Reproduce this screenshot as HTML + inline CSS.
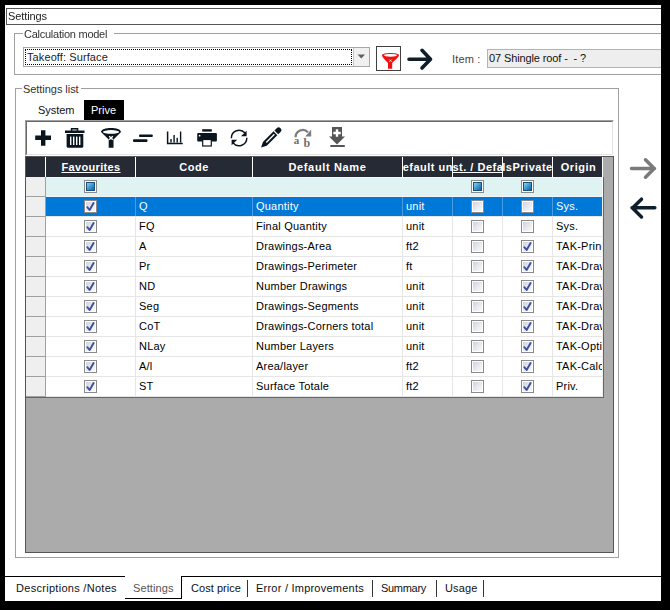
<!DOCTYPE html><html><head><meta charset="utf-8"><style>
*{margin:0;padding:0;box-sizing:border-box}
html,body{width:670px;height:610px;overflow:hidden;background:#000}
body{font-family:"Liberation Sans",sans-serif;font-size:11px;color:#000;position:relative}
.a{position:absolute}
.t{position:absolute;white-space:nowrap;line-height:13px}
.gl{position:absolute;background:#a0a0a0}
.cb{position:absolute;width:13px;height:13px;border:1px solid #8a8a8a;background:#fff}
.cb .in{position:absolute;left:1px;top:1px;width:9px;height:9px;background:linear-gradient(135deg,#cfd4de 0%,#e6e8ec 50%,#fafafa 100%)}
.cb.ind .in{background:linear-gradient(135deg,#8fd3f0 0%,#3b9bd0 50%,#1b5f98 100%);border:1px solid #1d4e80}
.hd{position:absolute;height:19px;color:#fff;font-weight:bold;line-height:19px;overflow:hidden;white-space:nowrap;display:flex;justify-content:center;letter-spacing:0.5px}
.hd span{flex:none}
.cell{position:absolute;height:19px;line-height:19px;overflow:hidden;white-space:nowrap;padding-left:3px;letter-spacing:0.22px}
</style></head><body><div class="a" style="left:0;top:0;width:661px;height:601px;overflow:hidden">
<div class="a" style="left:5px;top:5px;width:656px;height:596px;background:#fff"></div>
<div class="a" style="left:6px;top:8px;width:660px;height:17px;border:1px solid #555"></div>
<div class="t" style="left:8px;top:10px;color:#222;letter-spacing:-0.1px;will-change:transform">Settings</div>
<div class="gl" style="left:14px;top:33px;width:1px;height:42px"></div>
<div class="gl" style="left:14px;top:74px;width:650px;height:1px"></div>
<div class="gl" style="left:14px;top:33px;width:9px;height:1px"></div>
<div class="gl" style="left:114px;top:33px;width:550px;height:1px"></div>
<div class="t" style="left:24px;top:28px;color:#333;letter-spacing:-0.25px;will-change:transform">Calculation model</div>
<div class="a" style="left:23px;top:47px;width:347px;height:20px;border:1px solid #a8a8a8;background:#fff"></div>
<div class="a" style="left:25px;top:49px;width:327px;height:16px;border:1px dotted #000"></div>
<div class="a" style="left:353px;top:48px;width:16px;height:18px;background:#f0f0f0;border-left:1px solid #c8c8c8"></div>
<svg class="a" style="left:357px;top:54px" width="9" height="5"><path d="M0.5 0.5 H8 L4.25 4.5 Z" fill="#606060"/></svg>
<div class="t" style="left:27px;top:51px;color:#1a1a2a;letter-spacing:0.1px">Takeoff: Surface</div>
<div class="a" style="left:376px;top:46px;width:25px;height:25px;border:1px solid #404040;background:#fff"></div>
<svg class="a" style="left:372px;top:42px" width="32" height="32" viewBox="0 0 32 32"><path d="M10 13.3 C10 10.2 27 10.2 27 13.3 C27 15.2 22.5 18.5 20.2 21 V26.8 H16 V21 C13.6 18.5 10 15.2 10 13.3 Z" fill="#ee1111"/><ellipse cx="18.5" cy="13.3" rx="6.6" ry="1.4" fill="#fff"/><path d="M17.4 17.6 L19.6 19.8 M19.6 17.6 L17.4 19.8" stroke="#fff" stroke-width="0.8"/></svg>
<svg class="a" style="left:400px;top:44px" width="40" height="30"><path d="M9 15.2 H30 M22 6.3 L30.5 15.2 L22 24" fill="none" stroke="#0f1e2a" stroke-width="3.6" stroke-linecap="round" stroke-linejoin="round"/></svg>
<div class="t" style="left:452px;top:53px;color:#444;letter-spacing:0.15px">Item :</div>
<div class="a" style="left:487px;top:49px;width:200px;height:19px;border:1px solid #aab4c4;background:#eeeeee"></div>
<div class="t" style="left:489px;top:52px;color:#111;letter-spacing:-0.12px">07 Shingle roof -&nbsp; - ?</div>
<div class="gl" style="left:15px;top:88px;width:1px;height:470px"></div>
<div class="gl" style="left:15px;top:557px;width:604px;height:1px"></div>
<div class="gl" style="left:618px;top:88px;width:1px;height:470px"></div>
<div class="gl" style="left:15px;top:88px;width:7px;height:1px"></div>
<div class="gl" style="left:81px;top:88px;width:538px;height:1px"></div>
<div class="t" style="left:23px;top:83px;color:#333;letter-spacing:-0.05px">Settings list</div>
<div class="t" style="left:38px;top:104px;color:#111;letter-spacing:-0.05px">System</div>
<div class="a" style="left:84px;top:100px;width:40px;height:20px;background:#000"></div>
<div class="t" style="left:91px;top:104px;color:#fff">Prive</div>
<div class="a" style="left:25px;top:120px;width:589px;height:36px;border-top:1px solid #a0a0a0;border-left:1px solid #a0a0a0;border-right:1px solid #fff;border-bottom:1px solid #fff"></div>
<div class="a" style="left:26px;top:121px;width:587px;height:34px;border-top:1px solid #696969;border-left:1px solid #696969;border-right:1px solid #e3e3e3;border-bottom:1px solid #e3e3e3"></div>
<svg class="a" style="left:35px;top:130px" width="17" height="17"><path d="M6 0.2 H10.4 V5.6 H16 V10 H10.4 V15.7 H6 V10 H0.2 V5.6 H6 Z" fill="#0a1520"/></svg>
<svg class="a" style="left:64px;top:127px" width="22" height="22"><path d="M6.8 1 H14.3 V3.6 H20.5 V6 H1 V3.6 H6.8 Z" fill="#0a1520"/><rect x="8.3" y="2.3" width="4.5" height="1.4" fill="#fff" opacity="0.6"/><path d="M2.6 7 H19.3 V19.6 Q19.3 20.7 18.2 20.7 H3.7 Q2.6 20.7 2.6 19.6 Z" fill="#0a1520"/><rect x="6" y="9.6" width="1.4" height="8.4" fill="#fff"/><rect x="9" y="9.6" width="1.4" height="8.4" fill="#fff"/><rect x="12" y="9.6" width="1.4" height="8.4" fill="#fff"/><rect x="15" y="9.6" width="1.4" height="8.4" fill="#fff"/></svg>
<svg class="a" style="left:100px;top:127px" width="22" height="22"><path d="M1 5 C1 -0.5 21 -0.5 21 5 L13.5 12.5 V20.7 H8.7 V12.5 Z" fill="#0a1520"/><ellipse cx="11" cy="4.9" rx="8.1" ry="1.8" fill="#fff"/><path d="M9.2 9.3 L12.8 12.8 M12.8 9.3 L9.2 12.8" stroke="#fff" stroke-width="1.4"/></svg>
<svg class="a" style="left:132px;top:133px" width="22" height="10"><rect x="7" y="1.4" width="13.8" height="2.6" rx="1" fill="#0a1520"/><rect x="1" y="6.3" width="14.5" height="2.7" rx="1" fill="#0a1520"/></svg>
<svg class="a" style="left:166px;top:130px" width="18" height="16"><path d="M1.6 1.5 V13.6 H16.8" fill="none" stroke="#0a1520" stroke-width="1.5"/><rect x="4.3" y="9" width="1.4" height="3.6" fill="#0a1520"/><rect x="7.4" y="5" width="1.4" height="7.6" fill="#0a1520"/><rect x="10.5" y="7.8" width="1.4" height="4.8" fill="#0a1520"/><rect x="13.9" y="1.5" width="1.4" height="11.1" fill="#0a1520"/></svg>
<svg class="a" style="left:196px;top:128px" width="22" height="20"><rect x="6.2" y="1.2" width="9.6" height="2.4" fill="#0a1520"/><rect x="1.2" y="5" width="19.7" height="8.4" rx="1" fill="#0a1520"/><circle cx="3.6" cy="7.7" r="0.9" fill="#fff"/><rect x="6.7" y="11.5" width="8.6" height="6.5" fill="#fff" stroke="#0a1520" stroke-width="1.2"/></svg>
<svg class="a" style="left:229px;top:128px" width="20" height="20"><path d="M2.4 10.2 A7.7 7.7 0 0 1 16 5.05" fill="none" stroke="#0a1520" stroke-width="1.45"/><path d="M17.6 2.7 V8.3 H12 Z" fill="#0a1520"/><path d="M17.8 9.8 A7.7 7.7 0 0 1 4.2 14.95" fill="none" stroke="#0a1520" stroke-width="1.45"/><path d="M2.6 17.3 V11.7 H8.2 Z" fill="#0a1520"/></svg>
<svg class="a" style="left:255px;top:122px" width="30" height="30" viewBox="0 0 30 30"><path d="M6.1 25.6 L7.93 19.95 L18.53 9.35 L22.35 13.17 L11.75 23.77 Z" fill="#0a1520"/><path d="M11.25 20.45 L19.38 12.32" stroke="#fff" stroke-width="1.3"/><path d="M19.45 8.43 L23.27 12.25 L25.53 9.99 A2.7 2.7 0 0 0 21.71 6.17 Z" fill="#0a1520"/></svg>
<svg class="a" style="left:292px;top:126px" width="22" height="24"><path d="M3.6 11.2 A7.2 7.2 0 0 1 16 6.2" fill="none" stroke="#7e7e7e" stroke-width="2.3"/><path d="M19.2 3.4 V10.6 H13.2 Z" fill="#7e7e7e"/><text x="1.8" y="18" font-family="Liberation Serif" font-size="11" font-weight="bold" fill="#6e6e6e">a</text><text x="11.6" y="20.5" font-family="Liberation Serif" font-size="12" font-weight="bold" fill="#6e6e6e">b</text></svg>
<svg class="a" style="left:328px;top:126px" width="18" height="22"><path d="M4 1 H14 V10.5 H17 L9 18.5 L1 10.5 H4 Z" fill="#555"/><path d="M7.8 3.3 H10.2 V5.8 H12.7 V8.2 H10.2 V10.7 H7.8 V8.2 H5.3 V5.8 H7.8 Z" fill="#fff"/><rect x="2.3" y="19" width="14.5" height="2" fill="#555"/></svg>
<div class="a" style="left:25px;top:156px;width:589px;height:397px;background:#ababab;border:1px solid #555"></div>
<div class="a" style="left:26px;top:157px;width:577px;height:20px;background:#252a35"></div>
<div class="a" style="left:45px;top:157px;width:1px;height:20px;background:#fff"></div>
<div class="a" style="left:135px;top:157px;width:1px;height:20px;background:#fff"></div>
<div class="hd" style="left:47px;top:158px;width:88px;letter-spacing:0.35px"><span style="text-decoration:underline;">Favourites</span></div>
<div class="a" style="left:252px;top:157px;width:1px;height:20px;background:#fff"></div>
<div class="hd" style="left:136px;top:158px;width:116px;letter-spacing:0.5px"><span style="">Code</span></div>
<div class="a" style="left:402px;top:157px;width:1px;height:20px;background:#fff"></div>
<div class="hd" style="left:253px;top:158px;width:149px;letter-spacing:0.65px"><span style="">Default Name</span></div>
<div class="a" style="left:452px;top:157px;width:1px;height:20px;background:#fff"></div>
<div class="hd" style="left:403px;top:158px;width:49px;letter-spacing:0.5px"><span style="">Default unit</span></div>
<div class="a" style="left:502px;top:157px;width:1px;height:20px;background:#fff"></div>
<div class="hd" style="left:453px;top:158px;width:49px;letter-spacing:0.5px"><span style="text-decoration:underline;">Cust. / Default</span></div>
<div class="a" style="left:552px;top:157px;width:1px;height:20px;background:#fff"></div>
<div class="hd" style="left:503px;top:158px;width:49px;letter-spacing:0.5px"><span style="">IsPrivate</span></div>
<div class="a" style="left:602px;top:157px;width:1px;height:20px;background:#fff"></div>
<div class="hd" style="left:555px;top:158px;width:47px;letter-spacing:0.5px"><span style="">Origin</span></div>
<div class="a" style="left:26px;top:177px;width:578px;height:221px;background:#fff;border-right:1px solid #666;border-bottom:1px solid #666"></div>
<div class="a" style="left:46px;top:177px;width:556px;height:19px;background:#dff3f2;border-top:1px solid #ecfafa"></div>
<div class="a" style="left:26px;top:177px;width:20px;height:20px;background:#efefef;border-right:1px solid #a0a0a0;border-bottom:1px solid #a0a0a0"></div>
<div class="a" style="left:46px;top:196px;width:557px;height:1px;background:#f4f4f4"></div>
<div class="cb ind" style="left:84px;top:180px"><div class="in"></div></div>
<div class="cb ind" style="left:471px;top:180px"><div class="in"></div></div>
<div class="cb ind" style="left:521px;top:180px"><div class="in"></div></div>
<div class="a" style="left:26px;top:197px;width:20px;height:20px;background:#efefef;border-right:1px solid #a0a0a0;border-bottom:1px solid #a0a0a0"></div>
<div class="a" style="left:46px;top:197px;width:556px;height:19px;background:#0078d7"></div>
<div class="a" style="left:46px;top:216px;width:557px;height:1px;background:#e6e6e6"></div>
<div class="a" style="left:135px;top:197px;width:1px;height:19px;background:#4a9be2"></div>
<div class="a" style="left:252px;top:197px;width:1px;height:19px;background:#4a9be2"></div>
<div class="a" style="left:402px;top:197px;width:1px;height:19px;background:#4a9be2"></div>
<div class="a" style="left:452px;top:197px;width:1px;height:19px;background:#4a9be2"></div>
<div class="a" style="left:502px;top:197px;width:1px;height:19px;background:#4a9be2"></div>
<div class="a" style="left:552px;top:197px;width:1px;height:19px;background:#4a9be2"></div>
<div class="a" style="left:602px;top:197px;width:1px;height:20px;background:#f0f0f0"></div>
<div class="cb" style="left:84px;top:200px"><div class="in"></div><svg style="position:absolute;left:-1px;top:-1px" width="13" height="13" viewBox="0 0 13 13"><path d="M3.3 7.2 L5.6 10 L9.6 3" fill="none" stroke="#3b4f9e" stroke-width="1.9" stroke-linecap="round" stroke-linejoin="round"/></svg></div>
<div class="cell" style="left:136px;top:197px;width:116px;color:#fff">Q</div>
<div class="cell" style="left:253px;top:197px;width:149px;color:#fff">Quantity</div>
<div class="cell" style="left:403px;top:197px;width:49px;color:#fff">unit</div>
<div class="cb" style="left:471px;top:200px"><div class="in"></div></div>
<div class="cb" style="left:521px;top:200px"><div class="in"></div></div>
<div class="cell" style="left:553px;top:197px;width:49px;color:#fff">Sys.</div>
<div class="a" style="left:26px;top:217px;width:20px;height:20px;background:#efefef;border-right:1px solid #a0a0a0;border-bottom:1px solid #a0a0a0"></div>
<div class="a" style="left:46px;top:217px;width:556px;height:19px;background:#fff"></div>
<div class="a" style="left:46px;top:236px;width:557px;height:1px;background:#e6e6e6"></div>
<div class="a" style="left:135px;top:217px;width:1px;height:19px;background:#e6e6e6"></div>
<div class="a" style="left:252px;top:217px;width:1px;height:19px;background:#e6e6e6"></div>
<div class="a" style="left:402px;top:217px;width:1px;height:19px;background:#e6e6e6"></div>
<div class="a" style="left:452px;top:217px;width:1px;height:19px;background:#e6e6e6"></div>
<div class="a" style="left:502px;top:217px;width:1px;height:19px;background:#e6e6e6"></div>
<div class="a" style="left:552px;top:217px;width:1px;height:19px;background:#e6e6e6"></div>
<div class="a" style="left:602px;top:217px;width:1px;height:20px;background:#f0f0f0"></div>
<div class="cb" style="left:84px;top:220px"><div class="in"></div><svg style="position:absolute;left:-1px;top:-1px" width="13" height="13" viewBox="0 0 13 13"><path d="M3.3 7.2 L5.6 10 L9.6 3" fill="none" stroke="#3b4f9e" stroke-width="1.9" stroke-linecap="round" stroke-linejoin="round"/></svg></div>
<div class="cell" style="left:136px;top:217px;width:116px;color:#000">FQ</div>
<div class="cell" style="left:253px;top:217px;width:149px;color:#000">Final Quantity</div>
<div class="cell" style="left:403px;top:217px;width:49px;color:#000">unit</div>
<div class="cb" style="left:471px;top:220px"><div class="in"></div></div>
<div class="cb" style="left:521px;top:220px"><div class="in"></div></div>
<div class="cell" style="left:553px;top:217px;width:49px;color:#000">Sys.</div>
<div class="a" style="left:26px;top:237px;width:20px;height:20px;background:#efefef;border-right:1px solid #a0a0a0;border-bottom:1px solid #a0a0a0"></div>
<div class="a" style="left:46px;top:237px;width:556px;height:19px;background:#fff"></div>
<div class="a" style="left:46px;top:256px;width:557px;height:1px;background:#e6e6e6"></div>
<div class="a" style="left:135px;top:237px;width:1px;height:19px;background:#e6e6e6"></div>
<div class="a" style="left:252px;top:237px;width:1px;height:19px;background:#e6e6e6"></div>
<div class="a" style="left:402px;top:237px;width:1px;height:19px;background:#e6e6e6"></div>
<div class="a" style="left:452px;top:237px;width:1px;height:19px;background:#e6e6e6"></div>
<div class="a" style="left:502px;top:237px;width:1px;height:19px;background:#e6e6e6"></div>
<div class="a" style="left:552px;top:237px;width:1px;height:19px;background:#e6e6e6"></div>
<div class="a" style="left:602px;top:237px;width:1px;height:20px;background:#f0f0f0"></div>
<div class="cb" style="left:84px;top:240px"><div class="in"></div><svg style="position:absolute;left:-1px;top:-1px" width="13" height="13" viewBox="0 0 13 13"><path d="M3.3 7.2 L5.6 10 L9.6 3" fill="none" stroke="#3b4f9e" stroke-width="1.9" stroke-linecap="round" stroke-linejoin="round"/></svg></div>
<div class="cell" style="left:136px;top:237px;width:116px;color:#000">A</div>
<div class="cell" style="left:253px;top:237px;width:149px;color:#000">Drawings-Area</div>
<div class="cell" style="left:403px;top:237px;width:49px;color:#000">ft2</div>
<div class="cb" style="left:471px;top:240px"><div class="in"></div></div>
<div class="cb" style="left:521px;top:240px"><div class="in"></div><svg style="position:absolute;left:-1px;top:-1px" width="13" height="13" viewBox="0 0 13 13"><path d="M3.3 7.2 L5.6 10 L9.6 3" fill="none" stroke="#3b4f9e" stroke-width="1.9" stroke-linecap="round" stroke-linejoin="round"/></svg></div>
<div class="cell" style="left:553px;top:237px;width:49px;color:#000">TAK-Principal</div>
<div class="a" style="left:26px;top:257px;width:20px;height:20px;background:#efefef;border-right:1px solid #a0a0a0;border-bottom:1px solid #a0a0a0"></div>
<div class="a" style="left:46px;top:257px;width:556px;height:19px;background:#fff"></div>
<div class="a" style="left:46px;top:276px;width:557px;height:1px;background:#e6e6e6"></div>
<div class="a" style="left:135px;top:257px;width:1px;height:19px;background:#e6e6e6"></div>
<div class="a" style="left:252px;top:257px;width:1px;height:19px;background:#e6e6e6"></div>
<div class="a" style="left:402px;top:257px;width:1px;height:19px;background:#e6e6e6"></div>
<div class="a" style="left:452px;top:257px;width:1px;height:19px;background:#e6e6e6"></div>
<div class="a" style="left:502px;top:257px;width:1px;height:19px;background:#e6e6e6"></div>
<div class="a" style="left:552px;top:257px;width:1px;height:19px;background:#e6e6e6"></div>
<div class="a" style="left:602px;top:257px;width:1px;height:20px;background:#f0f0f0"></div>
<div class="cb" style="left:84px;top:260px"><div class="in"></div><svg style="position:absolute;left:-1px;top:-1px" width="13" height="13" viewBox="0 0 13 13"><path d="M3.3 7.2 L5.6 10 L9.6 3" fill="none" stroke="#3b4f9e" stroke-width="1.9" stroke-linecap="round" stroke-linejoin="round"/></svg></div>
<div class="cell" style="left:136px;top:257px;width:116px;color:#000">Pr</div>
<div class="cell" style="left:253px;top:257px;width:149px;color:#000">Drawings-Perimeter</div>
<div class="cell" style="left:403px;top:257px;width:49px;color:#000">ft</div>
<div class="cb" style="left:471px;top:260px"><div class="in"></div></div>
<div class="cb" style="left:521px;top:260px"><div class="in"></div><svg style="position:absolute;left:-1px;top:-1px" width="13" height="13" viewBox="0 0 13 13"><path d="M3.3 7.2 L5.6 10 L9.6 3" fill="none" stroke="#3b4f9e" stroke-width="1.9" stroke-linecap="round" stroke-linejoin="round"/></svg></div>
<div class="cell" style="left:553px;top:257px;width:49px;color:#000">TAK-Drawings</div>
<div class="a" style="left:26px;top:277px;width:20px;height:20px;background:#efefef;border-right:1px solid #a0a0a0;border-bottom:1px solid #a0a0a0"></div>
<div class="a" style="left:46px;top:277px;width:556px;height:19px;background:#fff"></div>
<div class="a" style="left:46px;top:296px;width:557px;height:1px;background:#e6e6e6"></div>
<div class="a" style="left:135px;top:277px;width:1px;height:19px;background:#e6e6e6"></div>
<div class="a" style="left:252px;top:277px;width:1px;height:19px;background:#e6e6e6"></div>
<div class="a" style="left:402px;top:277px;width:1px;height:19px;background:#e6e6e6"></div>
<div class="a" style="left:452px;top:277px;width:1px;height:19px;background:#e6e6e6"></div>
<div class="a" style="left:502px;top:277px;width:1px;height:19px;background:#e6e6e6"></div>
<div class="a" style="left:552px;top:277px;width:1px;height:19px;background:#e6e6e6"></div>
<div class="a" style="left:602px;top:277px;width:1px;height:20px;background:#f0f0f0"></div>
<div class="cb" style="left:84px;top:280px"><div class="in"></div><svg style="position:absolute;left:-1px;top:-1px" width="13" height="13" viewBox="0 0 13 13"><path d="M3.3 7.2 L5.6 10 L9.6 3" fill="none" stroke="#3b4f9e" stroke-width="1.9" stroke-linecap="round" stroke-linejoin="round"/></svg></div>
<div class="cell" style="left:136px;top:277px;width:116px;color:#000">ND</div>
<div class="cell" style="left:253px;top:277px;width:149px;color:#000">Number Drawings</div>
<div class="cell" style="left:403px;top:277px;width:49px;color:#000">unit</div>
<div class="cb" style="left:471px;top:280px"><div class="in"></div></div>
<div class="cb" style="left:521px;top:280px"><div class="in"></div><svg style="position:absolute;left:-1px;top:-1px" width="13" height="13" viewBox="0 0 13 13"><path d="M3.3 7.2 L5.6 10 L9.6 3" fill="none" stroke="#3b4f9e" stroke-width="1.9" stroke-linecap="round" stroke-linejoin="round"/></svg></div>
<div class="cell" style="left:553px;top:277px;width:49px;color:#000">TAK-Drawings</div>
<div class="a" style="left:26px;top:297px;width:20px;height:20px;background:#efefef;border-right:1px solid #a0a0a0;border-bottom:1px solid #a0a0a0"></div>
<div class="a" style="left:46px;top:297px;width:556px;height:19px;background:#fff"></div>
<div class="a" style="left:46px;top:316px;width:557px;height:1px;background:#e6e6e6"></div>
<div class="a" style="left:135px;top:297px;width:1px;height:19px;background:#e6e6e6"></div>
<div class="a" style="left:252px;top:297px;width:1px;height:19px;background:#e6e6e6"></div>
<div class="a" style="left:402px;top:297px;width:1px;height:19px;background:#e6e6e6"></div>
<div class="a" style="left:452px;top:297px;width:1px;height:19px;background:#e6e6e6"></div>
<div class="a" style="left:502px;top:297px;width:1px;height:19px;background:#e6e6e6"></div>
<div class="a" style="left:552px;top:297px;width:1px;height:19px;background:#e6e6e6"></div>
<div class="a" style="left:602px;top:297px;width:1px;height:20px;background:#f0f0f0"></div>
<div class="cb" style="left:84px;top:300px"><div class="in"></div><svg style="position:absolute;left:-1px;top:-1px" width="13" height="13" viewBox="0 0 13 13"><path d="M3.3 7.2 L5.6 10 L9.6 3" fill="none" stroke="#3b4f9e" stroke-width="1.9" stroke-linecap="round" stroke-linejoin="round"/></svg></div>
<div class="cell" style="left:136px;top:297px;width:116px;color:#000">Seg</div>
<div class="cell" style="left:253px;top:297px;width:149px;color:#000">Drawings-Segments</div>
<div class="cell" style="left:403px;top:297px;width:49px;color:#000">unit</div>
<div class="cb" style="left:471px;top:300px"><div class="in"></div></div>
<div class="cb" style="left:521px;top:300px"><div class="in"></div><svg style="position:absolute;left:-1px;top:-1px" width="13" height="13" viewBox="0 0 13 13"><path d="M3.3 7.2 L5.6 10 L9.6 3" fill="none" stroke="#3b4f9e" stroke-width="1.9" stroke-linecap="round" stroke-linejoin="round"/></svg></div>
<div class="cell" style="left:553px;top:297px;width:49px;color:#000">TAK-Drawings</div>
<div class="a" style="left:26px;top:317px;width:20px;height:20px;background:#efefef;border-right:1px solid #a0a0a0;border-bottom:1px solid #a0a0a0"></div>
<div class="a" style="left:46px;top:317px;width:556px;height:19px;background:#fff"></div>
<div class="a" style="left:46px;top:336px;width:557px;height:1px;background:#e6e6e6"></div>
<div class="a" style="left:135px;top:317px;width:1px;height:19px;background:#e6e6e6"></div>
<div class="a" style="left:252px;top:317px;width:1px;height:19px;background:#e6e6e6"></div>
<div class="a" style="left:402px;top:317px;width:1px;height:19px;background:#e6e6e6"></div>
<div class="a" style="left:452px;top:317px;width:1px;height:19px;background:#e6e6e6"></div>
<div class="a" style="left:502px;top:317px;width:1px;height:19px;background:#e6e6e6"></div>
<div class="a" style="left:552px;top:317px;width:1px;height:19px;background:#e6e6e6"></div>
<div class="a" style="left:602px;top:317px;width:1px;height:20px;background:#f0f0f0"></div>
<div class="cb" style="left:84px;top:320px"><div class="in"></div><svg style="position:absolute;left:-1px;top:-1px" width="13" height="13" viewBox="0 0 13 13"><path d="M3.3 7.2 L5.6 10 L9.6 3" fill="none" stroke="#3b4f9e" stroke-width="1.9" stroke-linecap="round" stroke-linejoin="round"/></svg></div>
<div class="cell" style="left:136px;top:317px;width:116px;color:#000">CoT</div>
<div class="cell" style="left:253px;top:317px;width:149px;color:#000">Drawings-Corners total</div>
<div class="cell" style="left:403px;top:317px;width:49px;color:#000">unit</div>
<div class="cb" style="left:471px;top:320px"><div class="in"></div></div>
<div class="cb" style="left:521px;top:320px"><div class="in"></div><svg style="position:absolute;left:-1px;top:-1px" width="13" height="13" viewBox="0 0 13 13"><path d="M3.3 7.2 L5.6 10 L9.6 3" fill="none" stroke="#3b4f9e" stroke-width="1.9" stroke-linecap="round" stroke-linejoin="round"/></svg></div>
<div class="cell" style="left:553px;top:317px;width:49px;color:#000">TAK-Drawings</div>
<div class="a" style="left:26px;top:337px;width:20px;height:20px;background:#efefef;border-right:1px solid #a0a0a0;border-bottom:1px solid #a0a0a0"></div>
<div class="a" style="left:46px;top:337px;width:556px;height:19px;background:#fff"></div>
<div class="a" style="left:46px;top:356px;width:557px;height:1px;background:#e6e6e6"></div>
<div class="a" style="left:135px;top:337px;width:1px;height:19px;background:#e6e6e6"></div>
<div class="a" style="left:252px;top:337px;width:1px;height:19px;background:#e6e6e6"></div>
<div class="a" style="left:402px;top:337px;width:1px;height:19px;background:#e6e6e6"></div>
<div class="a" style="left:452px;top:337px;width:1px;height:19px;background:#e6e6e6"></div>
<div class="a" style="left:502px;top:337px;width:1px;height:19px;background:#e6e6e6"></div>
<div class="a" style="left:552px;top:337px;width:1px;height:19px;background:#e6e6e6"></div>
<div class="a" style="left:602px;top:337px;width:1px;height:20px;background:#f0f0f0"></div>
<div class="cb" style="left:84px;top:340px"><div class="in"></div><svg style="position:absolute;left:-1px;top:-1px" width="13" height="13" viewBox="0 0 13 13"><path d="M3.3 7.2 L5.6 10 L9.6 3" fill="none" stroke="#3b4f9e" stroke-width="1.9" stroke-linecap="round" stroke-linejoin="round"/></svg></div>
<div class="cell" style="left:136px;top:337px;width:116px;color:#000">NLay</div>
<div class="cell" style="left:253px;top:337px;width:149px;color:#000">Number Layers</div>
<div class="cell" style="left:403px;top:337px;width:49px;color:#000">unit</div>
<div class="cb" style="left:471px;top:340px"><div class="in"></div></div>
<div class="cb" style="left:521px;top:340px"><div class="in"></div><svg style="position:absolute;left:-1px;top:-1px" width="13" height="13" viewBox="0 0 13 13"><path d="M3.3 7.2 L5.6 10 L9.6 3" fill="none" stroke="#3b4f9e" stroke-width="1.9" stroke-linecap="round" stroke-linejoin="round"/></svg></div>
<div class="cell" style="left:553px;top:337px;width:49px;color:#000">TAK-Options</div>
<div class="a" style="left:26px;top:357px;width:20px;height:20px;background:#efefef;border-right:1px solid #a0a0a0;border-bottom:1px solid #a0a0a0"></div>
<div class="a" style="left:46px;top:357px;width:556px;height:19px;background:#fff"></div>
<div class="a" style="left:46px;top:376px;width:557px;height:1px;background:#e6e6e6"></div>
<div class="a" style="left:135px;top:357px;width:1px;height:19px;background:#e6e6e6"></div>
<div class="a" style="left:252px;top:357px;width:1px;height:19px;background:#e6e6e6"></div>
<div class="a" style="left:402px;top:357px;width:1px;height:19px;background:#e6e6e6"></div>
<div class="a" style="left:452px;top:357px;width:1px;height:19px;background:#e6e6e6"></div>
<div class="a" style="left:502px;top:357px;width:1px;height:19px;background:#e6e6e6"></div>
<div class="a" style="left:552px;top:357px;width:1px;height:19px;background:#e6e6e6"></div>
<div class="a" style="left:602px;top:357px;width:1px;height:20px;background:#f0f0f0"></div>
<div class="cb" style="left:84px;top:360px"><div class="in"></div><svg style="position:absolute;left:-1px;top:-1px" width="13" height="13" viewBox="0 0 13 13"><path d="M3.3 7.2 L5.6 10 L9.6 3" fill="none" stroke="#3b4f9e" stroke-width="1.9" stroke-linecap="round" stroke-linejoin="round"/></svg></div>
<div class="cell" style="left:136px;top:357px;width:116px;color:#000">A/l</div>
<div class="cell" style="left:253px;top:357px;width:149px;color:#000">Area/layer</div>
<div class="cell" style="left:403px;top:357px;width:49px;color:#000">ft2</div>
<div class="cb" style="left:471px;top:360px"><div class="in"></div></div>
<div class="cb" style="left:521px;top:360px"><div class="in"></div><svg style="position:absolute;left:-1px;top:-1px" width="13" height="13" viewBox="0 0 13 13"><path d="M3.3 7.2 L5.6 10 L9.6 3" fill="none" stroke="#3b4f9e" stroke-width="1.9" stroke-linecap="round" stroke-linejoin="round"/></svg></div>
<div class="cell" style="left:553px;top:357px;width:49px;color:#000">TAK-Calc</div>
<div class="a" style="left:26px;top:377px;width:20px;height:20px;background:#efefef;border-right:1px solid #a0a0a0;border-bottom:1px solid #a0a0a0"></div>
<div class="a" style="left:46px;top:377px;width:556px;height:19px;background:#fff"></div>
<div class="a" style="left:46px;top:396px;width:557px;height:1px;background:#e6e6e6"></div>
<div class="a" style="left:135px;top:377px;width:1px;height:19px;background:#e6e6e6"></div>
<div class="a" style="left:252px;top:377px;width:1px;height:19px;background:#e6e6e6"></div>
<div class="a" style="left:402px;top:377px;width:1px;height:19px;background:#e6e6e6"></div>
<div class="a" style="left:452px;top:377px;width:1px;height:19px;background:#e6e6e6"></div>
<div class="a" style="left:502px;top:377px;width:1px;height:19px;background:#e6e6e6"></div>
<div class="a" style="left:552px;top:377px;width:1px;height:19px;background:#e6e6e6"></div>
<div class="a" style="left:602px;top:377px;width:1px;height:20px;background:#f0f0f0"></div>
<div class="cb" style="left:84px;top:380px"><div class="in"></div><svg style="position:absolute;left:-1px;top:-1px" width="13" height="13" viewBox="0 0 13 13"><path d="M3.3 7.2 L5.6 10 L9.6 3" fill="none" stroke="#3b4f9e" stroke-width="1.9" stroke-linecap="round" stroke-linejoin="round"/></svg></div>
<div class="cell" style="left:136px;top:377px;width:116px;color:#000">ST</div>
<div class="cell" style="left:253px;top:377px;width:149px;color:#000">Surface Totale</div>
<div class="cell" style="left:403px;top:377px;width:49px;color:#000">ft2</div>
<div class="cb" style="left:471px;top:380px"><div class="in"></div></div>
<div class="cb" style="left:521px;top:380px"><div class="in"></div><svg style="position:absolute;left:-1px;top:-1px" width="13" height="13" viewBox="0 0 13 13"><path d="M3.3 7.2 L5.6 10 L9.6 3" fill="none" stroke="#3b4f9e" stroke-width="1.9" stroke-linecap="round" stroke-linejoin="round"/></svg></div>
<div class="cell" style="left:553px;top:377px;width:49px;color:#000">Priv.</div>
<svg class="a" style="left:625px;top:150px" width="36" height="75"><path d="M6.5 18.5 H29.5 M20.5 9.8 L29.2 18.5 L20.5 27.2" fill="none" stroke="#7a7a7a" stroke-width="3.5" stroke-linecap="round" stroke-linejoin="round"/><path d="M29.8 57.8 H7 M16.5 49.2 L7.5 58 L16.5 67" fill="none" stroke="#0f1e2a" stroke-width="3.5" stroke-linecap="round" stroke-linejoin="round"/></svg>
<div class="a" style="left:5px;top:576px;width:120px;height:1px;background:#000"></div>
<div class="a" style="left:181px;top:576px;width:480px;height:1px;background:#000"></div>
<div class="a" style="left:181px;top:576px;width:1px;height:23px;background:#000"></div>
<div class="a" style="left:125px;top:598px;width:57px;height:1px;background:#000"></div>
<div class="t" style="left:16px;top:582px;color:#111;letter-spacing:0.29px">Descriptions /Notes</div>
<div class="t" style="left:133px;top:582px;color:#555;letter-spacing:0.1px">Settings</div>
<div class="t" style="left:191px;top:582px;color:#111;letter-spacing:0.05px">Cost price</div>
<div class="a" style="left:247px;top:580px;width:1px;height:17px;background:#333"></div>
<div class="t" style="left:256px;top:582px;color:#111;letter-spacing:0.23px">Error / Improvements</div>
<div class="a" style="left:372px;top:580px;width:1px;height:17px;background:#333"></div>
<div class="t" style="left:381px;top:582px;color:#111;letter-spacing:-0.3px">Summary</div>
<div class="a" style="left:436px;top:580px;width:1px;height:17px;background:#333"></div>
<div class="t" style="left:445px;top:582px;color:#111;letter-spacing:0.15px">Usage</div>
<div class="a" style="left:483px;top:580px;width:1px;height:17px;background:#333"></div>
</div></body></html>
